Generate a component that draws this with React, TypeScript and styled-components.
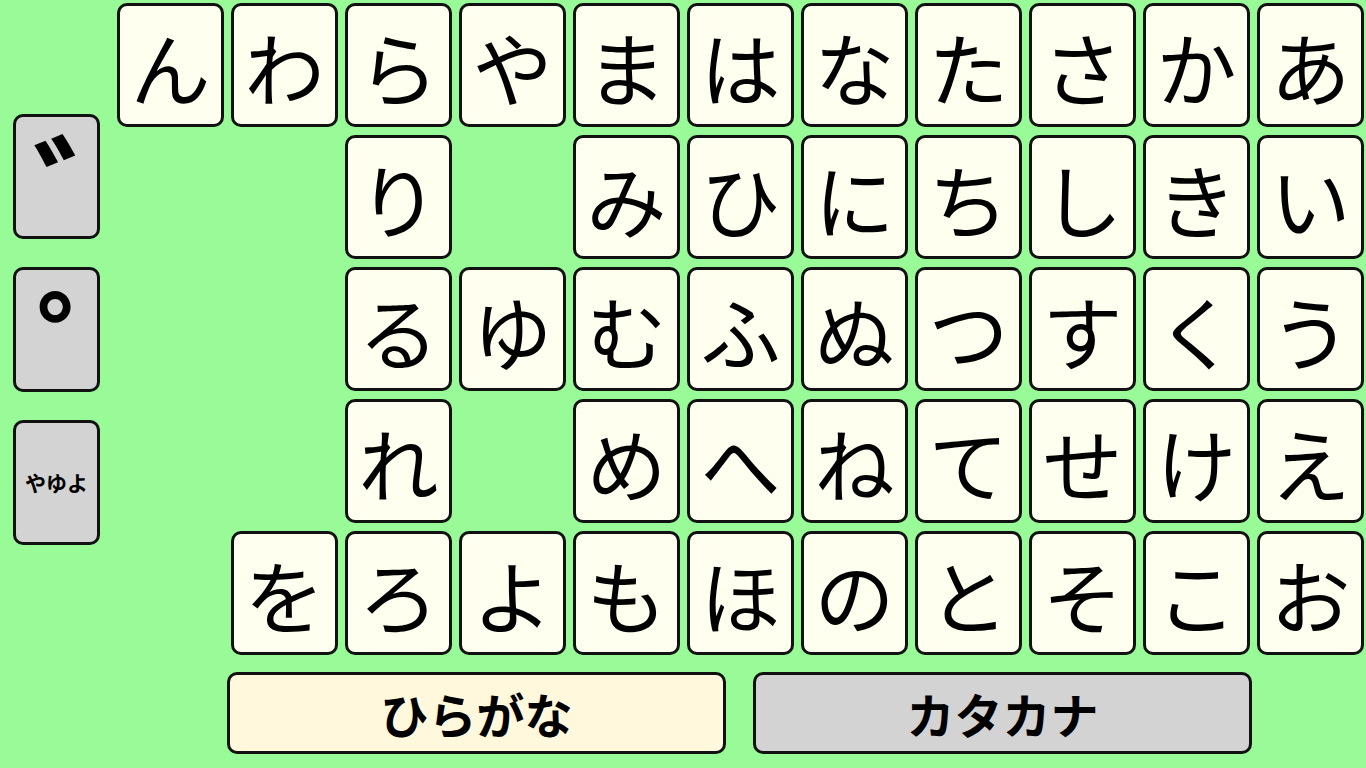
import React from "react";
import styled, { createGlobalStyle } from "styled-components";

const GlobalStyle = createGlobalStyle`
  html, body {
    margin: 0;
    padding: 0;
    background: #98fb98;
  }
  body {
    font-family: "Noto Sans CJK JP", "Noto Sans", sans-serif;
    color: #000;
  }
`;

const Page = styled.div`
  width: 1366px;
  height: 768px;
  box-sizing: border-box;
  padding: 3px 0 0 13px;
  display: flex;
  gap: 17px;
  background: #98fb98;
  overflow: hidden;
`;

const SideColumn = styled.div`
  display: flex;
  flex-direction: column;
  gap: 28px;
  padding-top: 111px;
`;

const SideButton = styled.button`
  width: 87px;
  height: 125px;
  box-sizing: border-box;
  border: 3px solid #111;
  border-radius: 10px;
  background: #d3d3d3;
  font-family: "Noto Sans CJK JP", sans-serif;
  font-weight: 700;
  font-size: 21px;
  line-height: 1;
  color: #000;
  display: flex;
  justify-content: center;
  align-items: center;
  padding: 0;
  overflow: hidden;
`;

const MarkButton = styled(SideButton)<{ $left: number; $top: number }>`
  justify-content: flex-start;
  align-items: flex-start;
  padding: ${(p) => p.$top}px 0 0 ${(p) => p.$left}px;
`;

const Mark = styled.span`
  display: block;
  font-size: 130px;
  line-height: 1;
  width: 0.42em;
  height: 0.46em;
  overflow: hidden;
  white-space: nowrap;
  flex: none;
  text-align: left;
`;

const Main = styled.div`
  display: flex;
  flex-direction: column;
  gap: 17px;
`;

const KeyGrid = styled.div`
  display: grid;
  grid-template-columns: repeat(11, 107px);
  grid-auto-rows: 124px;
  column-gap: 7px;
  row-gap: 8px;
`;

const Key = styled.button`
  box-sizing: border-box;
  width: 107px;
  height: 124px;
  border: 3px solid #111;
  border-radius: 10px;
  background: #fffff0;
  font-family: "Noto Sans CJK JP", sans-serif;
  font-weight: 400;
  font-size: 80px;
  line-height: 1;
  color: #000;
  padding: 0;
  display: flex;
  align-items: center;
  justify-content: center;
`;

const Empty = styled.div``;

const ModeRow = styled.div`
  display: flex;
  justify-content: center;
  gap: 27px;
  padding-right: 2px;
`;

const ModeButton = styled.button<{ $active: boolean }>`
  width: 499px;
  height: 82px;
  box-sizing: border-box;
  border: 3px solid #111;
  border-radius: 10px;
  background: ${(p) => (p.$active ? "#fff8dc" : "#d3d3d3")};
  font-family: "Noto Sans CJK JP", sans-serif;
  font-weight: 700;
  font-size: 48px;
  line-height: 1;
  color: #000;
  display: flex;
  align-items: center;
  justify-content: center;
  padding: 0;
`;

const rows: string[] = [
  "んわらやまはなたさかあ",
  "　　り　みひにちしきい",
  "　　るゆむふぬつすくう",
  "　　れ　めへねてせけえ",
  "　をろよもほのとそこお",
];

export default function App() {
  return (
    <>
      <GlobalStyle />
      <Page>
        <SideColumn>
          <MarkButton $left={17} $top={6}>
            <Mark>゛</Mark>
          </MarkButton>
          <MarkButton $left={20} $top={7}>
            <Mark>゜</Mark>
          </MarkButton>
          <SideButton>やゆよ</SideButton>
        </SideColumn>
        <Main>
          <KeyGrid>
            {rows.flatMap((row, r) =>
              Array.from(row).map((ch, c) =>
                ch === "　" ? <Empty key={`${r}-${c}`} /> : <Key key={`${r}-${c}`}>{ch}</Key>
              )
            )}
          </KeyGrid>
          <ModeRow>
            <ModeButton $active>ひらがな</ModeButton>
            <ModeButton $active={false}>カタカナ</ModeButton>
          </ModeRow>
        </Main>
      </Page>
    </>
  );
}
